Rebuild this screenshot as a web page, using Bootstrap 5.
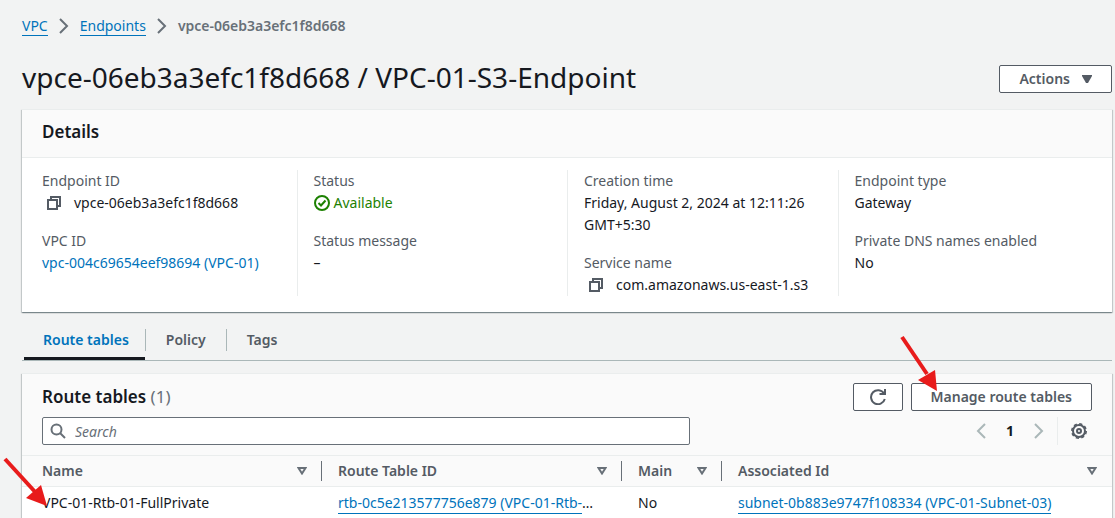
<!DOCTYPE html>
<html lang="en">
<head>
<meta charset="utf-8">
<meta name="viewport" content="width=device-width, initial-scale=1">
<title>VPC endpoint details</title>
<link href="https://cdn.jsdelivr.net/npm/bootstrap@5.3.0/dist/css/bootstrap.min.css" rel="stylesheet">
<style>
  :root { --ink: #16191f; --label: #545b64; --muted: #687078; --blue: #0073bb; --rule: #eaeded; --head: #fafafa; }
  body { background: #f2f3f3; color: var(--ink); font-family: "Noto Sans", sans-serif; font-size: 14px; line-height: 22px; }
  a { color: var(--blue); text-decoration: none; }
  .page { padding: 15px 3px 0 22px; }
  .ul-link { border-bottom: 1px solid var(--blue); }
  .crumbs { gap: 11px; }
  .crumbs a { line-height: 18px; display: inline-block; }
  .crumb-here { color: var(--muted); font-weight: 600; }
  .page-head { margin: 22px 0 12px; padding-bottom: 2px; }
  .page-title { font-size: 28px; line-height: 36px; font-weight: 400; }
  .btn-aws { border: 1px solid var(--label); border-radius: 2px; background: #fff; color: var(--label); font-size: 14px; font-weight: 600; line-height: 20px; padding: 3px 19px; }
  .page-head .btn-aws { margin-bottom: 2px; }
  .panel { background: #fff; border-top: 1px solid var(--rule); box-shadow: 0 1px 1px 0 rgba(0,28,36,.3), 1px 1px 1px 0 rgba(0,28,36,.15), -1px 1px 1px 0 rgba(0,28,36,.15); }
  .panel-head { background: var(--head); border-bottom: 1px solid var(--rule); padding: 10px 20px 13px; }
  .panel-title { font-size: 17px; line-height: 24px; font-weight: 600; }
  .count { color: var(--muted); font-weight: 400; }
  .facts { --bs-gutter-x: 32px; }
  .facts-body { padding: 12px 20px 16px; }
  .facts > div + div { border-left: 1px solid var(--rule); }
  .facts dt { font-weight: 400; color: var(--label); }
  .facts dd { margin: 0 0 16px; }
  .facts dd:last-child { margin-bottom: 0; }
  .copy { border: 0; background: none; padding: 0; margin: 0 12px 0 4px; line-height: 0; }
  .ok { color: #1d8102; }
  .tabs { border-bottom: 1px solid #aab7b8; margin: 13px 0 12px; padding-left: 2px; }
  .tabs .nav-link { color: var(--label); font-weight: 600; padding: 4px 20px 6px 21px; line-height: 22px; border-bottom: 3px solid transparent; }
  .tabs .nav-link.active { color: var(--blue); border-color: var(--ink); padding-left: 19px; padding-right: 16px; }
  .tabs .nav-item + .nav-item { background: linear-gradient(#aab7b8, #aab7b8) 0 4px / 1px 22px no-repeat; }
  .tools { background: var(--head); padding: 9px 20px 10px; }
  .tools-row { margin-top: 6px; }
  .search { width: 648px; }
  .search input { display: block; border: 1px solid var(--muted); border-radius: 2px; width: 100%; height: 28px; padding: 2px 10px 2px 32px; line-height: 22px; background: #fff; }
  .search input::placeholder { color: var(--muted); font-style: italic; opacity: 1; }
  .search svg { position: absolute; left: 8px; top: 6px; }
  .plain { border: 0; background: none; padding: 0; line-height: 0; }
  .pager { height: 28px; }
  .gear-box { border-left: 1px solid var(--rule); padding: 0 5px 0 13px; margin-left: 13px; height: 28px; }
  .grid { table-layout: fixed; width: 100%; }
  .grid th { background: var(--head); color: var(--label); border: solid var(--rule); border-width: 1px 0; padding: 4px 15px 4px 16px; font-weight: 600; }
  .grid th:first-child, .grid td:first-child { padding-left: 20px; }
  .grid th:not(:last-child) { background: linear-gradient(var(--muted), var(--muted)) 100% 5px / 1px 20px no-repeat var(--head); }
  .grid td { padding: 5px 20px 4px 16px; }
  .grid td a { display: inline-block; line-height: 20px; }
  .pointer { position: absolute; pointer-events: none; }
  .to-button { right: 153px; top: -49px; }
  .to-name { left: -20px; top: -31px; z-index: 2; }
</style>
</head>
<body>
<main class="page">
  <nav aria-label="Breadcrumb">
    <ol class="crumbs list-unstyled d-flex align-items-center mb-0">
      <li><a class="ul-link" href="#">VPC</a></li>
      <li class="d-flex" aria-hidden="true"><svg width="10" height="16" viewBox="0 0 10 16" fill="none" stroke="#687078" stroke-width="2"><path d="M1 1l7 7-7 7"/></svg></li>
      <li><a class="ul-link" href="#">Endpoints</a></li>
      <li class="d-flex" aria-hidden="true"><svg width="10" height="16" viewBox="0 0 10 16" fill="none" stroke="#687078" stroke-width="2"><path d="M1 1l7 7-7 7"/></svg></li>
      <li class="crumb-here" aria-current="page">vpce-06eb3a3efc1f8d668</li>
    </ol>
  </nav>

  <header class="page-head d-flex justify-content-between align-items-end">
    <h1 class="page-title mb-0">vpce-06eb3a3efc1f8d668 / VPC-01-S3-Endpoint</h1>
    <button type="button" class="btn-aws d-flex align-items-center gap-2">Actions <svg class="ms-1" width="10" height="8" viewBox="0 0 10 8"><path d="M0 0h10v1L6 8H4L0 1z" fill="#545b64"/></svg></button>
  </header>

  <section class="panel" aria-labelledby="details-title">
    <div class="panel-head"><h2 class="panel-title mb-0" id="details-title">Details</h2></div>
    <div class="facts-body">
      <div class="row facts">
        <div class="col-3"><dl class="mb-0">
          <dt>Endpoint ID</dt>
          <dd class="d-flex align-items-center"><button class="copy" type="button" aria-label="Copy endpoint ID"><svg width="16" height="16" viewBox="0 0 16 16" fill="none" stroke="#545b64" stroke-width="2"><path d="M2 5h9v9H2zM5 5V2h9v9h-3"/></svg></button>vpce-06eb3a3efc1f8d668</dd>
          <dt>VPC ID</dt>
          <dd><a href="#">vpc-004c69654eef98694 (VPC-01)</a></dd>
        </dl></div>
        <div class="col-3"><dl class="mb-0">
          <dt>Status</dt>
          <dd class="ok d-flex align-items-center gap-1"><svg width="16" height="16" viewBox="0 0 16 16" fill="none" stroke="#1d8102" stroke-width="2"><circle cx="8" cy="8" r="7"/><path d="M4.500 8l2.500 2.500L11.500 5.500"/></svg>Available</dd>
          <dt>Status message</dt>
          <dd>–</dd>
        </dl></div>
        <div class="col-3"><dl class="mb-0">
          <dt>Creation time</dt>
          <dd>Friday, August 2, 2024 at 12:11:26 GMT+5:30</dd>
          <dt>Service name</dt>
          <dd class="d-flex align-items-center"><button class="copy" type="button" aria-label="Copy service name"><svg width="16" height="16" viewBox="0 0 16 16" fill="none" stroke="#545b64" stroke-width="2"><path d="M2 5h9v9H2zM5 5V2h9v9h-3"/></svg></button>com.amazonaws.us-east-1.s3</dd>
        </dl></div>
        <div class="col-3"><dl class="mb-0">
          <dt>Endpoint type</dt>
          <dd>Gateway</dd>
          <dt>Private DNS names enabled</dt>
          <dd>No</dd>
        </dl></div>
      </div>
    </div>
  </section>

  <ul class="nav tabs">
    <li class="nav-item"><a class="nav-link active" aria-current="page" href="#">Route tables</a></li>
    <li class="nav-item"><a class="nav-link" href="#">Policy</a></li>
    <li class="nav-item"><a class="nav-link" href="#">Tags</a></li>
  </ul>

  <section class="panel" aria-labelledby="rt-title">
    <div class="tools">
      <div class="d-flex align-items-center justify-content-between">
        <h2 class="panel-title mb-0" id="rt-title">Route tables <span class="count">(1)</span></h2>
        <div class="d-flex gap-2 position-relative">
          <button type="button" class="btn-aws px-3 d-flex align-items-center" aria-label="Refresh"><svg width="16" height="16" viewBox="0 0 16 16" fill="none" stroke="#545b64" stroke-width="2"><path d="M14.800 10A7 7 0 1 1 14 4.500M15 0v5H9.500"/></svg></button>
          <button type="button" class="btn-aws">Manage route tables</button>
          <svg class="pointer to-button" width="40" height="58" viewBox="0 0 40 58" aria-hidden="true"><path d="M3 3L28 40" stroke="#e81b1b" stroke-width="4"/><path d="M38 57L19 46 36 36z" fill="#e81b1b"/></svg>
        </div>
      </div>
      <div class="tools-row d-flex align-items-center justify-content-between">
        <div class="search position-relative">
          <svg width="16" height="16" viewBox="0 0 16 16" fill="none" stroke="#687078" stroke-width="2"><circle cx="6.500" cy="6.500" r="5"/><path d="M10 10l5 5"/></svg>
          <input type="text" placeholder="Search" aria-label="Search route tables">
        </div>
        <div class="pager d-flex align-items-center">
          <button class="plain" type="button" aria-label="Previous page"><svg width="10" height="16" viewBox="0 0 10 16" fill="none" stroke="#aab7b8" stroke-width="2"><path d="M9 1L2 8l7 7"/></svg></button>
          <span class="fw-bold px-3 mx-1">1</span>
          <button class="plain" type="button" aria-label="Next page"><svg width="10" height="16" viewBox="0 0 10 16" fill="none" stroke="#aab7b8" stroke-width="2"><path d="M1 1l7 7-7 7"/></svg></button>
          <div class="gear-box d-flex align-items-center"><button class="plain" type="button" aria-label="Preferences"><svg width="16" height="16" viewBox="0 0 16 16" fill="none" stroke="#545b64"><circle cx="8" cy="8" r="6" stroke-width="2"/><circle cx="8" cy="8" r="7.200" stroke-width="1.600" stroke-dasharray="3.200 2.455"/><circle cx="8" cy="8" r="2" stroke-width="2"/></svg></button></div>
        </div>
      </div>
    </div>
    <table class="grid">
      <colgroup><col style="width:300px"><col style="width:300px"><col style="width:100px"><col></colgroup>
      <thead><tr>
        <th scope="col"><div class="d-flex justify-content-between align-items-center">Name <svg width="10" height="8" viewBox="0 0 10 8" fill="none" stroke="#687078" stroke-width="2"><path d="M1.500 1h7L5 6.500z"/></svg></div></th>
        <th scope="col"><div class="d-flex justify-content-between align-items-center">Route Table ID <svg width="10" height="8" viewBox="0 0 10 8" fill="none" stroke="#687078" stroke-width="2"><path d="M1.500 1h7L5 6.500z"/></svg></div></th>
        <th scope="col"><div class="d-flex justify-content-between align-items-center">Main <svg width="10" height="8" viewBox="0 0 10 8" fill="none" stroke="#687078" stroke-width="2"><path d="M1.500 1h7L5 6.500z"/></svg></div></th>
        <th scope="col"><div class="d-flex justify-content-between align-items-center">Associated Id <svg width="10" height="8" viewBox="0 0 10 8" fill="none" stroke="#687078" stroke-width="2"><path d="M1.500 1h7L5 6.500z"/></svg></div></th>
      </tr></thead>
      <tbody><tr>
        <td class="position-relative">VPC-01-Rtb-01-FullPrivate<svg class="pointer to-name" width="48" height="52" viewBox="0 0 48 52" aria-hidden="true"><path d="M3 3L35 38" stroke="#e81b1b" stroke-width="4"/><path d="M45 50L24 42 39 29z" fill="#e81b1b"/></svg></td>
        <td class="text-nowrap"><a class="ul-link" href="#">rtb-0c5e213577756e879 (VPC-01-Rtb-</a>…</td>
        <td>No</td>
        <td><a class="ul-link" href="#">subnet-0b883e9747f108334 (VPC-01-Subnet-03)</a></td>
      </tr></tbody>
    </table>
  </section>
</main>
<script src="https://cdn.jsdelivr.net/npm/bootstrap@5.3.0/dist/js/bootstrap.bundle.min.js"></script>
</body>
</html>
